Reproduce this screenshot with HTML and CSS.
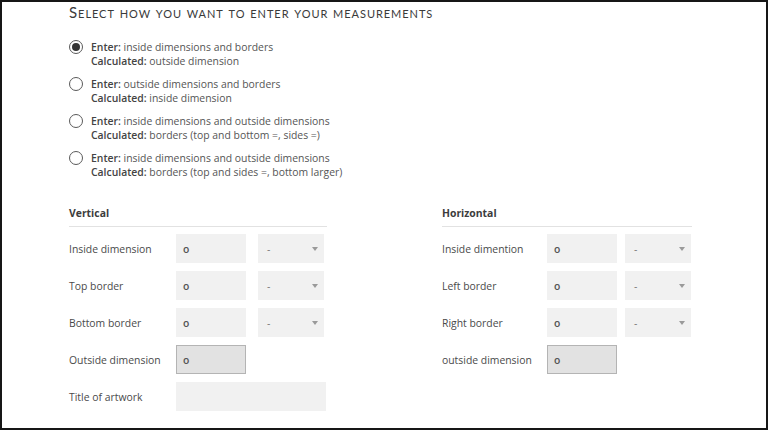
FILE: index.html
```html
<!DOCTYPE html>
<html lang="en">
<head>
<meta charset="utf-8">
<title>Measurements</title>
<link rel="stylesheet" href="styles.css">
</head>
<body>
<div class="frame">
  <h1 class="title">Select how you want to enter your measurements</h1>

  <div class="options">
    <label class="option">
      <span class="radio checked"></span>
      <span class="opt-text">
        <span class="line"><b>Enter:</b> inside dimensions and borders</span>
        <span class="line"><b>Calculated:</b> outside dimension</span>
      </span>
    </label>
    <label class="option">
      <span class="radio"></span>
      <span class="opt-text">
        <span class="line"><b>Enter:</b> outside dimensions and borders</span>
        <span class="line"><b>Calculated:</b> inside dimension</span>
      </span>
    </label>
    <label class="option">
      <span class="radio"></span>
      <span class="opt-text">
        <span class="line"><b>Enter:</b> inside dimensions and outside dimensions</span>
        <span class="line"><b>Calculated:</b> borders (top and bottom =, sides =)</span>
      </span>
    </label>
    <label class="option">
      <span class="radio"></span>
      <span class="opt-text">
        <span class="line"><b>Enter:</b> inside dimensions and outside dimensions</span>
        <span class="line"><b>Calculated:</b> borders (top and sides =, bottom larger)</span>
      </span>
    </label>
  </div>

  <div class="columns">
    <section class="col col-v">
      <h2 class="col-head">Vertical</h2>
      <div class="grid grid-v">
        <span class="lbl">Inside dimension</span>
        <span class="inp">o</span>
        <span class="sel">-<i class="caret"></i></span>

        <span class="lbl">Top border</span>
        <span class="inp">o</span>
        <span class="sel">-<i class="caret"></i></span>

        <span class="lbl">Bottom border</span>
        <span class="inp">o</span>
        <span class="sel">-<i class="caret"></i></span>

        <span class="lbl">Outside dimension</span>
        <span class="inp inp-calc">o</span>
        <span class="empty"></span>

        <span class="lbl">Title of artwork</span>
        <span class="inp inp-wide"></span>
      </div>
    </section>

    <section class="col col-h">
      <h2 class="col-head">Horizontal</h2>
      <div class="grid grid-h">
        <span class="lbl">Inside dimention</span>
        <span class="inp">o</span>
        <span class="sel">-<i class="caret"></i></span>

        <span class="lbl">Left border</span>
        <span class="inp">o</span>
        <span class="sel">-<i class="caret"></i></span>

        <span class="lbl">Right border</span>
        <span class="inp">o</span>
        <span class="sel">-<i class="caret"></i></span>

        <span class="lbl">outside dimension</span>
        <span class="inp inp-calc">o</span>
        <span class="empty"></span>
      </div>
    </section>
  </div>
</div>
</body>
</html>
```

FILE: styles.css
```css
html, body {
  margin: 0;
  padding: 0;
  background: #ffffff;
}

.frame {
  width: 768px;
  height: 430px;
  box-sizing: border-box;
  border: 2px solid #161616;
  padding: 2px 0 0 67px;
  font-family: "Open Sans", "Liberation Sans", sans-serif;
  font-size: 10.4px;
  color: #555;
  overflow: hidden;
}

.title {
  margin: 0;
  font-family: Lato, "Liberation Sans", sans-serif;
  font-weight: 400;
  font-size: 15px;
  line-height: 16px;
  font-variant: small-caps;
  letter-spacing: 0.95px;
  color: #3a3a3a;
}

.options {
  margin-top: 20px;
  display: flex;
  flex-direction: column;
  gap: 9px;
}

.option {
  display: flex;
  align-items: flex-start;
  gap: 8px;
}

.radio {
  width: 14px;
  height: 14px;
  box-sizing: border-box;
  border: 1.5px solid #5a5a5a;
  border-radius: 50%;
  display: flex;
  align-items: center;
  justify-content: center;
  flex: none;
}

.radio.checked::after {
  content: "";
  width: 8px;
  height: 8px;
  border-radius: 50%;
  background: #333;
}

.opt-text {
  display: flex;
  flex-direction: column;
}

.line {
  line-height: 14px;
  white-space: nowrap;
}

.line b {
  font-weight: 600;
  color: #444;
}

.columns {
  display: flex;
  gap: 115px;
  margin-top: 27px;
}

.col-v { width: 258px; }
.col-h { width: 250px; }

.col-head {
  margin: 0 0 7px;
  font-size: 10.4px;
  line-height: 14px;
  font-weight: 700;
  color: #3c3c3c;
  padding-bottom: 6px;
  border-bottom: 1px solid #e2e2e2;
}

.grid {
  display: grid;
  grid-auto-rows: 29px;
  row-gap: 8px;
  align-items: center;
}

.grid-v {
  grid-template-columns: 107px 70px 78px;
  --sel-gap: 12px;
}

.grid-h {
  grid-template-columns: 105px 70px 74px;
  --sel-gap: 8px;
}

.lbl {
  color: #4a4a4a;
  white-space: nowrap;
}

.inp, .sel {
  height: 29px;
  box-sizing: border-box;
  background: #f1f1f1;
  display: flex;
  align-items: center;
  color: #555;
  font-weight: 600;
}

.inp {
  padding-left: 7px;
}

.inp-calc {
  background: #e2e2e2;
  border: 1px solid #b4b4b4;
  padding-left: 6px;
}

.inp-wide {
  grid-column: 2 / 4;
  width: 150px;
}

.sel {
  margin-left: var(--sel-gap);
  padding: 0 6px 0 9px;
  justify-content: space-between;
  font-weight: 400;
  color: #777;
}

.caret {
  width: 0;
  height: 0;
  border-left: 3px solid transparent;
  border-right: 3px solid transparent;
  border-top: 4px solid #9a9a9a;
}
```
